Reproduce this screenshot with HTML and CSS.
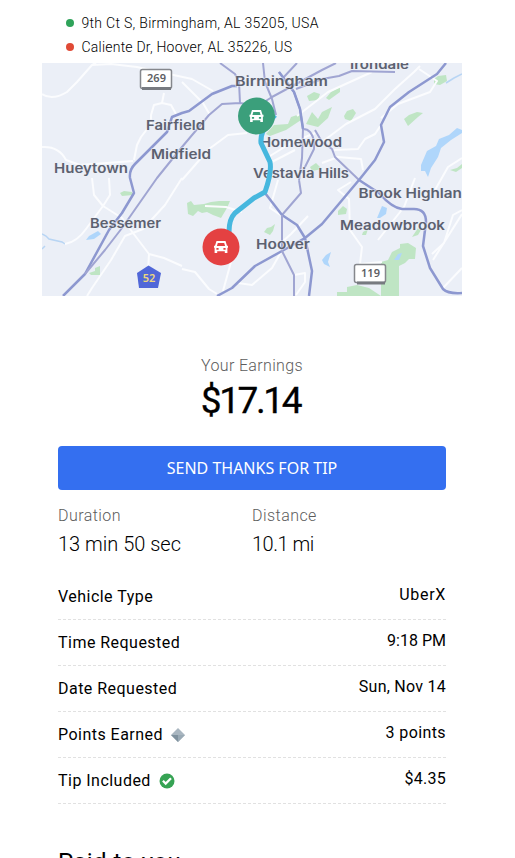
FILE: index.html
```html
<!DOCTYPE html>
<html lang="en">
<head>
<meta charset="utf-8">
<title>Trip details</title>
<link rel="stylesheet" href="styles.css">
</head>
<body>
<main class="trip">
  <ul class="stops">
    <li class="stop"><span class="dot dot-start"></span><span class="from">9th Ct S, Birmingham, AL 35205, USA</span></li>
    <li class="stop"><span class="dot dot-end"></span><span class="to">Caliente Dr, Hoover, AL 35226, US</span></li>
  </ul>
  <svg class="map" viewBox="42 63 420 233" width="420" height="233">
    <defs>
      <g id="car">
        <path fill="#fff" fill-rule="evenodd" d="M-4.5-6H4.5L6-1.2H7V.8H6.4V6H3.8V4.2H-3.8V6H-6.4V.8H-7V-1.2H-6ZM-3.2-4L-4.1-1H4.1L3.2-4ZM-4.6 1V2.7H-2.4V1ZM2.4 1V2.7H4.6V1Z"/>
      </g>
    </defs>
    <rect x="42" y="63" width="420" height="233" fill="#ebeff7"/>
    <g class="park">
      <path d="M187 203L191 201L194 205L204 204L211 202L219 201L230 201L227 208L221 218L213 215L207 212L202 213L198 211L193 216L188 214Z"/>
      <path d="M264 232L267 228L271 227L275 224L273 231L270 235Z"/>
      <path d="M266 134L274 125L288 124L291 117L300 114L301 120L286 130L270 136Z"/>
      <path d="M307 96L314 92L320 94L318 100L309 101Z"/>
      <path d="M306 124L312 112L318 119L322 112L332 107L328 118L318 127Z"/>
      <path d="M310 167L316 163L322 169L312 171Z"/>
      <path d="M326 98L331 92L340 87L340 92L329 100Z"/>
      <path d="M344 116L347 111L353 109L356 113L351 121L345 119Z"/>
      <path d="M404 119L409 115L417 112L423 113L418 117L408 126Z"/>
      <path d="M434 79L438 76L446 75L447 81L440 85L434 84Z"/>
      <path d="M338 211L343 206L347 209L346 214L338 215Z"/>
      <path d="M120 193L124 191L132 192L133 195L122 196Z"/>
      <path d="M89 273L95 271V268L100 266V275H91Z"/>
      <path d="M363 232L368 229L366 235L362 235Z"/>
      <path d="M412 237L418 228L421 230L418 235Z"/>
      <path d="M381 296V262L388 260L392 252L400 248V244L408 243L416 248L415 259H409L405 263L399 266V296H337V292H347V287L357 285L369 288Z"/>
      <path d="M450 170L457 168L462 164V168L456 172Z"/>
    </g>
    <g class="water">
      <path d="M421 165L427 151L436 146L439 139L449 135L457 128L462 130V133L451 140L441 148L438 157L431 168L428 177L425 171L421 171Z"/>
      <path d="M86 240L89 236L98 231L101 234L94 239Z"/>
      <path d="M377 218L382 206L387 208L386 214L380 218Z"/>
      <path d="M394 260L398 254L402 253L399 260Z"/>
      <path d="M322 260L326 255L331 252L328 262L330 267L324 264Z"/>
      <path class="stream" d="M42 234L46 236L49 239L62 242L65 244M42 249L45 246M446 83L454 78L462 74"/>
    </g>
    <g class="street">
      <path d="M42 94Q52 101 67 92L77 82L92 65L96 63M92 65L111 64L137 67L155 71L192 79L213 91M164 93L162 103L154 105L151 115L151 124L141 137L137 145L134 160M162 103L171 105L176 114M42 147Q59 146 66 160L80 165L133 161"/>
      <path d="M65 244Q77 242 86 229L103 206L94 195L92 178M103 206L110 195L109 178M103 206L122 218L133 233L149 254L164 258L182 266M149 254L148 272M182 178L165 205L143 229L125 236L111 260L92 288L87 296"/>
      <path d="M182 82L203 103L210 115M182 180L209 149L228 135L247 133M270 156L291 143L315 133M268 164L295 150M205 206L226 207L242 212M182 269L195 272L209 289L217 294M223 291L234 251M238 283L252 285L272 268L281 252M282 216L270 208L278 180M308 216L291 234L282 242M294 275L305 273L305 282L296 295"/>
      <path d="M297 116L328 92L372 72M322 142L346 124L375 109L395 89L414 72L420 66M381 125L375 134L365 139L358 149L334 150M322 163L338 157L361 159L363 170M381 118L398 104L430 92L437 81L419 69M351 182L338 190L349 199L350 230L362 247L360 264L382 262M415 178L404 207L378 240M462 214L433 260M435 190L448 167L462 158M432 254L444 243L453 215L462 210M443 288L462 268"/>
    </g>
    <g class="road">
      <path class="main" d="M237 86L232 86L212 94L189 111L182 113L172 117L167 132L135 164Q129 170 130 178L134 193L122 213L109 230L85 274L63 296"/>
      <path d="M85 274L105 250L122 228L157 178L182 147L209 115L222 104L240 103L239 82L235 74L220 63M240 103L258 106L272 97L322 70L336 63M263 63L265 82L272 99L276 115M279 72L294 92L300 109L303 129M303 129L302 158L299 180M299 180L301 193L282 215M303 129Q312 129 314 142L314 149L302 173M315 130L322 142L332 149L335 157L359 180M297 63L282 79M296 89L322 79L339 76L352 71L395 72"/>
      <path class="main" d="M446 63L437 74L409 92L390 107L381 125L384 142L375 160L359 180L322 224L305 238L282 251L255 266L232 288L217 296M279 72L294 92L300 109L303 129M359 180L379 193Q392 208 402 209H414Q426 209 426 222L423 246L430 268L443 289Q448 294 462 293M265 193L282 215L297 225L305 238L312 271L309 296"/>
      <path d="M282 215V251L294 275V296"/>
    </g>
    <g class="place">
      <text x="350" y="69" textLength="59" lengthAdjust="spacingAndGlyphs">Irondale</text>
      <text x="235" y="86" textLength="93" lengthAdjust="spacingAndGlyphs">Birmingham</text>
      <text x="146" y="129.500" textLength="59" lengthAdjust="spacingAndGlyphs">Fairfield</text>
      <text x="151" y="159" textLength="60" lengthAdjust="spacingAndGlyphs">Midfield</text>
      <text x="54" y="173" textLength="74" lengthAdjust="spacingAndGlyphs">Hueytown</text>
      <text x="260" y="147" textLength="82" lengthAdjust="spacingAndGlyphs">Homewood</text>
      <text x="253" y="178" textLength="96" lengthAdjust="spacingAndGlyphs">Vestavia Hills</text>
      <text x="358.500" y="198" textLength="113" lengthAdjust="spacingAndGlyphs">Brook Highland</text>
      <text x="340" y="230" textLength="105" lengthAdjust="spacingAndGlyphs">Meadowbrook</text>
      <text x="90" y="228" textLength="71" lengthAdjust="spacingAndGlyphs">Bessemer</text>
      <text x="256" y="249" textLength="54" lengthAdjust="spacingAndGlyphs">Hoover</text>
    </g>
    <path class="route" d="M275 115L267 124Q260 134 261 143L270 162Q272 172 265 192L254 198L235 213Q229 219 229 232"/>
    <g class="shield">
      <rect x="140.500" y="69.500" width="31" height="19" rx="2"/><path d="M142 88.500H171"/><text x="156.500" y="82">269</text>
      <rect x="354.500" y="264.500" width="31" height="18" rx="2"/><path d="M357 283H385"/><text x="370.500" y="277">119</text>
    </g>
    <path d="M137 273L148.500 265.500L161 273L158 288H139Z" fill="#5067d8"/>
    <text class="county" x="149" y="282">52</text>
    <circle cx="256.500" cy="116" r="18.500" fill="#3b9f7b"/>
    <use href="#car" x="256.500" y="116"/>
    <circle cx="221" cy="247" r="18.500" fill="#e44142"/>
    <use href="#car" x="221" y="247"/>
  </svg>

  <section class="summary">
    <p class="caption earn-caption">Your Earnings</p>
    <p class="amount">$17.14</p>
    <button class="thanks">SEND THANKS FOR TIP</button>
    <div class="stats">
      <div><p class="caption">Duration</p><p class="stat time">13 min 50 sec</p></div>
      <div><p class="caption">Distance</p><p class="stat miles">10.1 mi</p></div>
    </div>
    <dl class="details">
      <div class="row"><dt>Vehicle Type</dt><dd class="wide">UberX</dd></div>
      <div class="row"><dt>Time Requested</dt><dd>9:18 PM</dd></div>
      <div class="row"><dt>Date Requested</dt><dd class="date">Sun, Nov 14</dd></div>
      <div class="row"><dt>Points Earned
        <svg class="gem" width="14" height="14" viewBox="0 0 14 14"><path d="M7 0L14 7L7 14L0 7Z" fill="#a9b6c0"/><path d="M0 7H7V14Z" fill="#7f919e"/><path d="M7 7H14L7 14Z" fill="#9aaab5"/></svg>
      </dt><dd class="points">3 points</dd></div>
      <div class="row"><dt>Tip Included
        <svg class="check" width="16" height="16" viewBox="0 0 16 16"><circle cx="8" cy="8" r="7.500" fill="#36a354"/><path d="M3.900 7.800L6.700 10.600L12 5.300" fill="none" stroke="#fff" stroke-width="2.300"/></svg>
      </dt><dd class="date">$4.35</dd></div>
    </dl>
    <h2 class="paid">Paid to you</h2>
  </section>
</main>
</body>
</html>
```
FILE: styles.css
```css
* { box-sizing: border-box; }
html, body { margin: 0; height: 858px; overflow: hidden; background: #fff; }
body { font-family: Roboto, "Liberation Sans", sans-serif; font-size: 16px; color: #000; }
p, ul, dl, dd, h2 { margin: 0; padding: 0; }
.trip { width: 420px; margin-left: 42px; }
.stops { list-style: none; height: 63px; padding: 11px 0 0 24px; }
.stop { display: flex; align-items: center; height: 24px; font-size: 14px; font-weight: 300; color: #000; white-space: nowrap; }
.dot { width: 8px; height: 8px; border-radius: 50%; margin-right: 7.5px; }
.dot-start { background: #2fa35a; }
.dot-end { background: #e04a36; }
.from { letter-spacing: .3px; }
.to { letter-spacing: .22px; }
.map { display: block; }

.park { fill: #bfe5c4; }
.water { fill: #afd6fb; }
.stream { fill: none; stroke: #b8d5f4; stroke-width: 1.5; }
.street { fill: none; stroke: #fbfcfe; stroke-width: 2; stroke-linejoin: round; }
.road { fill: none; stroke: #a0a5d2; stroke-width: 2; stroke-linejoin: round; }
.road .main { stroke: #8d98d0; stroke-width: 2.500; }
.route { fill: none; stroke: #46b7de; stroke-width: 5; stroke-linejoin: round; }
.place { font: 600 13.200px Inter, sans-serif; fill: #5c6170; stroke: #ebeff7; stroke-width: 1.500px; stroke-opacity: .6; paint-order: stroke; }
.shield rect { fill: #fff; stroke: #85878c; stroke-width: 1.500; }
.shield path { stroke: #777a80; stroke-width: 3; }
.shield text { font: 600 11px "Noto Sans", sans-serif; fill: #5d5e63; text-anchor: middle; }
.county { font: 600 11px "Noto Sans", sans-serif; fill: #ecd77d; text-anchor: middle; }

.summary { padding: 58px 16px 0; }
.caption { font-size: 16px; line-height: 24px; font-weight: 300; color: #5c5c5c; letter-spacing: .45px; }
.earn-caption { text-align: center; letter-spacing: .35px; }
.amount { height: 46px; line-height: 46px; padding-right: 3px; font-size: 37px; text-align: center; letter-spacing: -2.4px; -webkit-text-stroke: .3px #000; }
.thanks { display: block; width: 388px; height: 44px; margin: 22px 0 0; padding: 0; border: 0; border-radius: 4px; background: #346ff0; color: #fff; font: 16px "Noto Sans", sans-serif; }
.stats { display: grid; grid-template-columns: 1fr 1fr; padding-top: 14px; height: 84px; }
.stat { font-size: 20px; font-weight: 300; line-height: 32px; color: #000; }
.miles { letter-spacing: -.5px; }
.row { display: flex; justify-content: space-between; height: 46px; border-bottom: 1px dashed #e1e1e1; }
dt { display: flex; align-items: center; height: 45px; white-space: nowrap; letter-spacing: .47px; }
dd { line-height: 41px; }
.wide { letter-spacing: .7px; }
.date { letter-spacing: .25px; }
.points { letter-spacing: .4px; }
.gem { margin-left: 8px; }
.check { margin-left: 8px; }
.paid { margin-top: 42px; font-size: 24px; font-weight: 400; line-height: 32px; letter-spacing: .4px; }
```
